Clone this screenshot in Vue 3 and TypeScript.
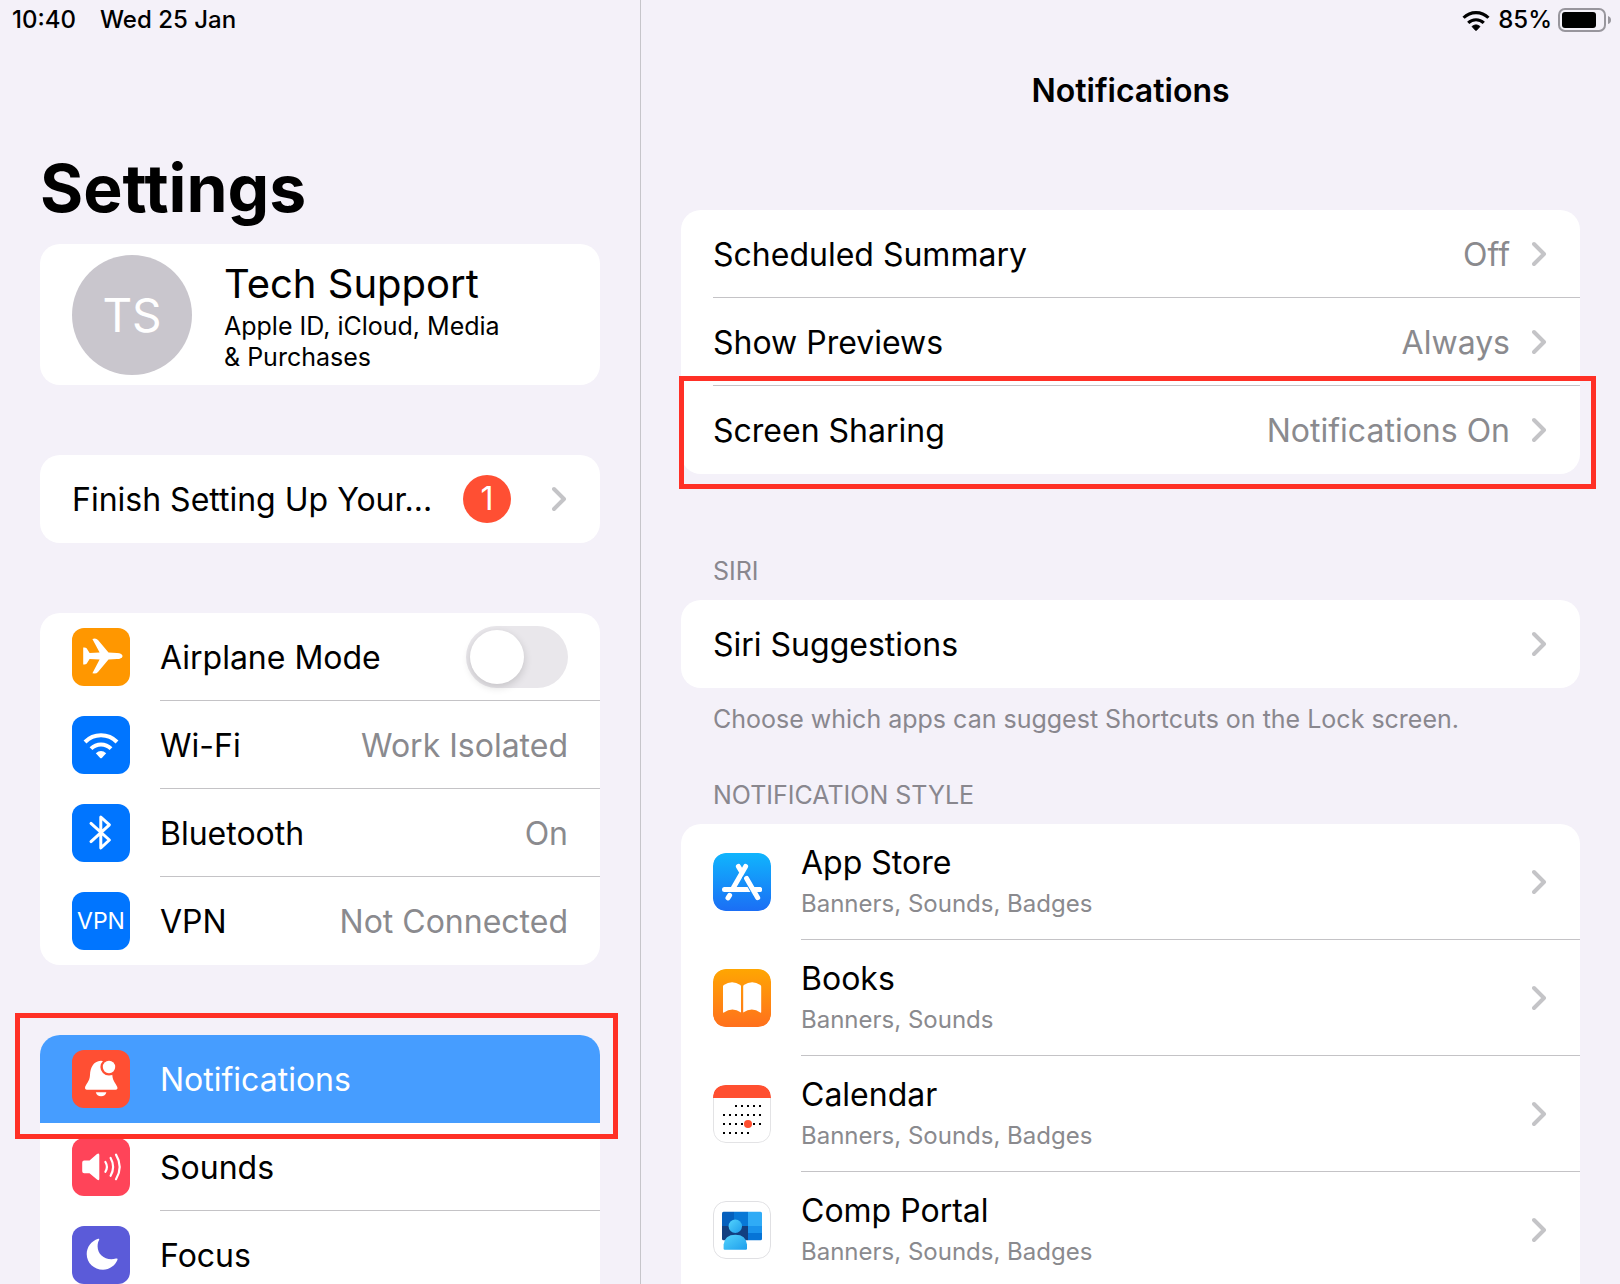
<script setup lang="ts">
import { ref } from 'vue'

interface SettingRow {
  id: string
  label: string
  value?: string
  color: string
  toggle?: boolean
  glyph?: string
}

interface AppRow {
  name: string
  detail: string
  art: string
}

const airplaneMode = ref(false)

const wifiGlyph =
  '<g fill="none" stroke="currentColor" stroke-width="4"><path d="M13 26 A22.5 22.5 0 0 1 45 26"/><path d="M19 32.6 A14.2 14.2 0 0 1 39 32.6"/></g><path fill="currentColor" d="M23.8 37.2 Q29 33 34.2 37.2 L29.8 42 Q29 42.6 28.2 42Z"/>'

const connectivity: SettingRow[] = [
  {
    id: 'airplane',
    label: 'Airplane Mode',
    color: '#ff9700',
    toggle: true,
    glyph:
      '<path fill="currentColor" d="M50.5 28 C50.5 30.3 47.5 31 45 31.1 L36.5 31.4 L26 44 Q24.8 45.5 22.5 45.5 L20.4 45.3 L27.6 31.4 L17.6 31 L14.6 35.8 Q13.6 36.7 11.2 36.4 L11.2 19.6 Q13.6 19.3 14.6 20.2 L17.6 25 L27.6 24.6 L20.4 10.9 Q24 9.6 26 12 L36.5 24.6 L45 24.9 Q50.5 25.3 50.5 28Z"/>',
  },
  { id: 'wifi', label: 'Wi-Fi', value: 'Work Isolated', color: '#0075ff', glyph: wifiGlyph },
  {
    id: 'bluetooth',
    label: 'Bluetooth',
    value: 'On',
    color: '#0075ff',
    glyph:
      '<path fill="none" stroke="currentColor" stroke-width="3" stroke-linejoin="round" stroke-linecap="round" d="M19 19.4 L37.4 36 L28.8 44 V13 L37.4 20.8 L19 37.6"/>',
  },
  { id: 'vpn', label: 'VPN', value: 'Not Connected', color: '#0075ff' },
]

const alerts: SettingRow[] = [
  {
    id: 'notifications',
    label: 'Notifications',
    color: '#ff4f33',
    glyph:
      '<path fill="currentColor" d="M29 10.8 C21 11.2 18.4 18 18 25 C17.7 31.4 14 34 13.1 37 Q12.6 39.8 15 39.8 H43.6 Q46 39.8 45.3 37 C44.3 34 40.7 31.4 40.3 25 C40 18 37 11.2 29 10.8Z"/><circle cx="37" cy="17" r="8.6" fill="#ff4f33"/><circle cx="37" cy="17" r="6.2" fill="currentColor"/><path fill="currentColor" d="M23.8 42.2 H34.4 Q33.4 46.2 29.1 46.2 Q24.8 46.2 23.8 42.2Z"/>',
  },
  {
    id: 'sounds',
    label: 'Sounds',
    color: '#ff4459',
    glyph:
      '<path fill="currentColor" d="M10.2 24.5 Q10.2 22.5 12.2 22.5 H17.5 L25 16 Q27.3 14.6 27.3 17 V40.8 Q27.3 43 25 41.6 L17.5 35.2 H12.2 Q10.2 35.2 10.2 33.2Z"/><g fill="none" stroke="currentColor" stroke-width="2.2" stroke-linecap="round"><path d="M33.4 24 Q36.4 28.9 33.4 33.8"/><path d="M38.6 20 Q43.6 28.9 38.6 37.8"/><path d="M44 16.6 Q51.4 28.9 44 41.2"/></g>',
  },
  {
    id: 'focus',
    label: 'Focus',
    color: '#5b5bd9',
    glyph:
      '<path fill="currentColor" d="M26.2 12.8 C19 15 14.7 21.5 14.7 28 C14.7 37 22 43.7 31 43.7 C37.5 43.7 43.3 39.5 45.5 33.8 Q46 32 44 32.6 C34 35.3 25.6 29 25.6 20.5 C25.6 17.6 26.2 15.8 27.1 14 Q27.8 12.4 26.2 12.8Z"/>',
  },
]

const general = [
  { label: 'Scheduled Summary', value: 'Off' },
  { label: 'Show Previews', value: 'Always' },
  { label: 'Screen Sharing', value: 'Notifications On', marked: true },
]

const calendarDots = [
  [2, 3, 4, 5, 6],
  [0, 1, 2, 3, 4, 5, 6],
  [0, 1, 2, 3, 5, 6],
  [0, 1, 2, 3, 4],
]
  .flatMap((cols, r) => cols.map((c) => `<rect x="${10 + c * 6}" y="${20 + r * 9}" width="2" height="2"/>`))
  .join('')

const apps: AppRow[] = [
  {
    name: 'App Store',
    detail: 'Banners, Sounds, Badges',
    art: '<defs><linearGradient id="store" x2="0" y2="1"><stop stop-color="#10b5fd"/><stop offset="1" stop-color="#1b6ef5"/></linearGradient></defs><rect width="58" height="58" rx="13" fill="url(#store)"/><g fill="none" stroke="#fff" stroke-width="5" stroke-linecap="round"><path d="M11.5 36.5 H46.5 M32.6 13.4 L20.5 34.5 M25.4 13.4 L29 19.6 M16.6 42.4 L15 44.8"/><path stroke="#178ef9" stroke-width="7" stroke-linecap="butt" d="M32 22.6 L43 41.8"/><path d="M33.6 25.4 L44.7 44.7 M41.4 36.5 H46.5"/></g>',
  },
  {
    name: 'Books',
    detail: 'Banners, Sounds',
    art: '<defs><linearGradient id="books" x2="0" y2="1"><stop stop-color="#ffa602"/><stop offset="1" stop-color="#ff701d"/></linearGradient></defs><rect width="58" height="58" rx="13" fill="url(#books)"/><path fill="#fff" d="M10 17.4 Q10 16.6 10.8 16 Q19 10.4 27.4 16 Q28 16.6 28 17.4 V43.4 Q19 37.6 11 43.6 Q10 44.2 10 43Z M30.2 17.4 Q30.2 16.6 30.8 16 Q39.2 10.4 47.4 16 Q48.2 16.6 48.2 17.4 V43 Q48.2 44.2 47.2 43.6 Q39.2 37.6 30.2 43.4Z"/>',
  },
  {
    name: 'Calendar',
    detail: 'Banners, Sounds, Badges',
    art: `<rect x=".5" y=".5" width="57" height="57" rx="12.5" fill="#fff" stroke="#e3e3e5"/><path fill="#ff4f30" d="M0 13 Q0 0 13 0 H45 Q58 0 58 13Z"/><g fill="#000">${calendarDots}</g><circle cx="35" cy="39" r="4" fill="#ff4f30"/>`,
  },
  {
    name: 'Comp Portal',
    detail: 'Banners, Sounds, Badges',
    art: '<defs><linearGradient id="person" x2="1" y2="1"><stop stop-color="#53d3fc"/><stop offset="1" stop-color="#1f9eec"/></linearGradient><clipPath id="screen"><rect x="9" y="10.7" width="40" height="28.5" rx="1.5"/></clipPath></defs><rect x=".5" y=".5" width="57" height="57" rx="12.5" fill="#fff" stroke="#e0e0e3"/><g clip-path="url(#screen)"><path fill="#0560bd" d="M9 10H21V25H9Z"/><path fill="#0878d6" d="M21 10H35V25H21Z"/><path fill="#2fabf6" d="M35 10H49V25H35Z"/><path fill="#123f80" d="M9 25H35V40H9Z"/><path fill="#1a93ec" d="M35 25H49V32H35Z"/><path fill="#0674d6" d="M35 32H49V40H35Z"/></g><circle cx="22.3" cy="25.2" r="6.7" fill="url(#person)"/><path fill="url(#person)" d="M10.6 47.6 V43.5 Q11.6 33.8 22.4 33.8 Q33 33.8 34 43.5 V47.6 Q34 48.8 32.8 48.8 H11.8 Q10.6 48.8 10.6 47.6Z"/>',
  },
]
</script>

<template>
  <div class="settings">
    <nav class="sidebar" aria-label="Settings">
      <div class="status">
        <span>10:40</span>
        <span>Wed 25 Jan</span>
      </div>
      <h1>Settings</h1>

      <button class="card profile" type="button">
        <span class="avatar">TS</span>
        <span class="who">
          <span class="name">Tech Support</span>
          <span class="sub">Apple ID, iCloud, Media<br />&amp; Purchases</span>
        </span>
      </button>

      <div class="card gap">
        <button class="row" type="button">
          <span class="label">Finish Setting Up Your...</span>
          <span class="badge">1</span>
          <svg class="chevron" viewBox="0 0 16 26" aria-hidden="true"><path d="M2 3 L12 13 L2 23" /></svg>
        </button>
      </div>

      <div class="card gap">
        <component
          :is="row.toggle ? 'label' : 'button'"
          v-for="row in connectivity"
          :key="row.id"
          class="row with-icon"
          :type="row.toggle ? undefined : 'button'"
        >
          <span class="icon" :style="{ background: row.color }">
            <svg v-if="row.glyph" viewBox="0 0 58 58" aria-hidden="true" v-html="row.glyph" />
            <template v-else>VPN</template>
          </span>
          <span class="label">{{ row.label }}</span>
          <input v-if="row.toggle" v-model="airplaneMode" class="switch" type="checkbox" role="switch" />
          <span v-else class="value">{{ row.value }}</span>
        </component>
      </div>

      <div class="card gap last">
        <button
          v-for="row in alerts"
          :key="row.id"
          class="row with-icon"
          :class="{ selected: row.id === 'notifications' }"
          type="button"
        >
          <span class="icon" :style="{ background: row.color }">
            <svg viewBox="0 0 58 58" aria-hidden="true" v-html="row.glyph" />
          </span>
          <span class="label">{{ row.label }}</span>
          <span v-if="row.id === 'notifications'" class="mark mark-side" />
        </button>
      </div>
    </nav>

    <main class="pane">
      <div class="status status-end">
        <svg class="status-wifi" viewBox="11 16 36 27" aria-hidden="true" v-html="wifiGlyph" />
        <span>85%</span>
        <svg class="battery" viewBox="0 0 54 24" aria-hidden="true">
          <rect x="1" y="1" width="46" height="22" rx="6" fill="none" stroke="#98969d" stroke-width="2" />
          <rect x="4" y="4" width="34" height="16" rx="3" />
          <path d="M50 8 Q53 9 53 12 Q53 15 50 16Z" fill="#98969d" />
        </svg>
      </div>
      <h2>Notifications</h2>

      <div class="card">
        <button v-for="row in general" :key="row.label" class="row" type="button">
          <span class="label">{{ row.label }}</span>
          <span class="value">{{ row.value }}</span>
          <svg class="chevron" viewBox="0 0 16 26" aria-hidden="true"><path d="M2 3 L12 13 L2 23" /></svg>
          <span v-if="row.marked" class="mark mark-pane" />
        </button>
      </div>

      <h3 class="first">SIRI</h3>
      <div class="card">
        <button class="row" type="button">
          <span class="label">Siri Suggestions</span>
          <svg class="chevron" viewBox="0 0 16 26" aria-hidden="true"><path d="M2 3 L12 13 L2 23" /></svg>
        </button>
      </div>
      <p class="note">Choose which apps can suggest Shortcuts on the Lock screen.</p>

      <h3>NOTIFICATION STYLE</h3>
      <div class="card last">
        <button v-for="app in apps" :key="app.name" class="row with-icon app" type="button">
          <svg class="icon" viewBox="0 0 58 58" aria-hidden="true" v-html="app.art" />
          <span class="label">
            {{ app.name }}
            <span class="detail">{{ app.detail }}</span>
          </span>
          <svg class="chevron" viewBox="0 0 16 26" aria-hidden="true"><path d="M2 3 L12 13 L2 23" /></svg>
        </button>
      </div>
    </main>
  </div>
</template>

<style>
body {
  background: #f4f1f9;
}
</style>

<style scoped>
.settings {
  display: grid;
  grid-template-columns: 641fr 979fr;
  height: 100vh;
  overflow: hidden;
  background: #f4f1f9;
  color: #000;
  font-family: Inter, 'Liberation Sans', sans-serif;
  font-size: 32px;
  line-height: 40px;
}

.settings *,
.settings *::before {
  box-sizing: border-box;
}

.sidebar,
.pane {
  min-width: 0;
  padding: 0 40px;
}

.sidebar {
  border-right: 1px solid #c6c5ca;
}

.status {
  display: flex;
  align-items: center;
  gap: 24px;
  height: 40px;
  margin: 0 -28px;
  font-size: 24px;
  font-weight: 500;
}

.status-end {
  justify-content: flex-end;
  gap: 8px;
  margin-right: -32px;
}

.status-wifi {
  width: 28px;
  height: 21px;
  stroke: currentColor;
  stroke-width: 1;
}

.battery {
  width: 54px;
  height: 24px;
  margin-left: -2px;
}

h1,
h2,
h3,
p {
  margin: 0;
}

h1 {
  padding-top: 108px;
  padding-bottom: 16px;
  font-size: 66px;
  font-weight: 700;
  line-height: 80px;
}

h2 {
  padding: 31px 0 99px;
  font-size: 32px;
  font-weight: 600;
  text-align: center;
}

h3,
.note {
  padding: 0 32px;
  color: #89878e;
  font-size: 25px;
  font-weight: 400;
  line-height: 32px;
}

h3 {
  padding-top: 60px;
  padding-bottom: 13px;
}

h3.first {
  padding-top: 81px;
}

.note {
  padding-top: 15px;
  margin-bottom: -16px;
}

.card {
  display: block;
  width: 100%;
  border-radius: 20px;
  background: #fff;
}

.last {
  padding-bottom: 20px;
}

.gap {
  margin-top: 70px;
}

button {
  border: 0;
  background: none;
  color: inherit;
  font: inherit;
  text-align: left;
}

.profile {
  display: flex;
  align-items: center;
  gap: 32px;
  height: 141px;
  padding: 0 32px;
}

.avatar {
  display: flex;
  flex: none;
  align-items: center;
  justify-content: center;
  width: 120px;
  height: 120px;
  border-radius: 50%;
  background: #c9c6cd;
  color: #fff;
  font-size: 46px;
}

.who,
.name,
.sub {
  display: block;
}

.who {
  padding-top: 3px;
}

.name {
  font-size: 40px;
  line-height: 48px;
}

.sub {
  margin-top: 3px;
  font-size: 25px;
  line-height: 31px;
}

.row {
  position: relative;
  display: flex;
  align-items: center;
  width: 100%;
  height: 88px;
  padding: 0 32px;
}

.row + .row::before {
  content: '';
  position: absolute;
  top: -1px;
  right: 0;
  left: 32px;
  height: 1px;
  background: #c4c3c6;
}

.row.with-icon + .row::before {
  left: 120px;
}

.row.selected + .row::before {
  display: none;
}

.selected {
  border-radius: 20px 20px 0 0;
  background: #469dff;
  color: #fff;
}

.label,
.value {
  padding-top: 2px;
  white-space: nowrap;
}

.label {
  flex: 1;
  min-width: 0;
}

.value {
  color: #8a8a8e;
}

.icon {
  display: flex;
  flex: none;
  align-items: center;
  justify-content: center;
  width: 58px;
  height: 58px;
  margin-right: 30px;
  border-radius: 12px;
  color: #fff;
  font-size: 23px;
}

.badge {
  display: flex;
  align-items: center;
  justify-content: center;
  width: 48px;
  height: 48px;
  margin-right: 19px;
  border-radius: 50%;
  background: #ff4f33;
  color: #fff;
}

.chevron {
  flex: none;
  width: 16px;
  height: 26px;
  margin-left: 22px;
  fill: none;
  stroke: #c4c4c7;
  stroke-width: 4;
  stroke-linecap: round;
  stroke-linejoin: round;
}

.switch {
  position: relative;
  width: 102px;
  height: 62px;
  margin: 0;
  border-radius: 31px;
  background: #e9e7eb;
  appearance: none;
}

.switch::before {
  content: '';
  position: absolute;
  top: 4px;
  left: 4px;
  width: 54px;
  height: 54px;
  border-radius: 50%;
  background: #fff;
  box-shadow: 0 3px 8px rgba(0, 0, 0, 0.16);
}

.switch:checked {
  background: #34c759;
}

.switch:checked::before {
  left: 44px;
}

.app {
  height: 116px;
}

.app .label {
  padding-top: 4px;
}

.detail {
  display: block;
  color: #8a8a8e;
  font-size: 24px;
  line-height: 42px;
}

.mark {
  position: absolute;
  z-index: 1;
  border: 5px solid #ff3026;
  pointer-events: none;
}

.mark-side {
  inset: -22px -18px -16px -25px;
}

.mark-pane {
  inset: -10px -16px -15px -2px;
}
</style>
